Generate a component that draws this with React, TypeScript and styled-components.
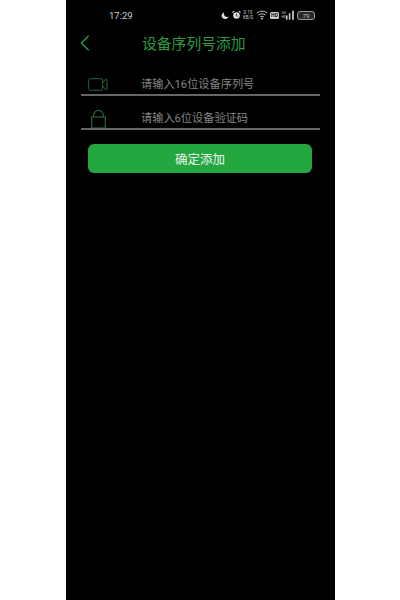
import styled, { createGlobalStyle } from 'styled-components'

const GlobalStyle = createGlobalStyle`
  html, body { margin: 0; padding: 0; background: #fff; }
  body { font-family: 'Roboto', 'Noto Sans CJK SC', sans-serif; }
`

const Moon = () => (
  <svg width="8" height="9" viewBox="0 0 10 10">
    <path d="M4 .8A4.4 4.4 0 1 0 9.4 6.2 4 4 0 0 1 4 .8z" fill="#ddd" />
  </svg>
)

const Alarm = () => (
  <svg width="9" height="10" viewBox="0 0 10 10">
    <circle cx="5" cy="5.6" r="3.6" fill="#ddd" />
    <path d="M5 3.6v2.2l1.4.8" stroke="#111" strokeWidth="0.9" fill="none" />
    <path d="M.6 2.4 2.4.7M9.4 2.4 7.6.7" stroke="#ddd" strokeWidth="1.2" />
  </svg>
)

const Wifi = () => (
  <svg width="12" height="10" viewBox="0 0 12 10" fill="none" stroke="#ccc" strokeWidth="1">
    <path d="M.8 3.2c3-2.7 7.4-2.7 10.4 0" />
    <path d="M2.5 5.1c2-1.7 5-1.7 7 0" />
    <path d="M4.2 6.9c1-.8 2.6-.8 3.6 0" />
    <circle cx="6" cy="8.6" r=".6" fill="#ccc" />
  </svg>
)

const Signal = () => (
  <svg width="9" height="10" viewBox="0 0 9 10" fill="#ccc">
    <rect x="0" y="5.5" width="1.6" height="4.5" />
    <rect x="3" y="3" width="1.6" height="7" />
    <rect x="6.5" y="0.5" width="1.8" height="9.5" />
  </svg>
)

const BackArrow = () => (
  <svg width="10" height="16" viewBox="0 0 10 16" fill="none" stroke="#2b9a42" strokeWidth="1.4">
    <path d="M8.6.8 1.4 8l7.2 7.2" />
  </svg>
)

const Camera = () => (
  <svg width="20" height="13" viewBox="0 0 21 14" fill="none" stroke="#2f6b3c" strokeWidth="1">
    <rect x="0.5" y="0.7" width="15" height="12.6" rx="2" />
    <path d="M15.5 5.2 18.6 1.4c.6-.6 1.6-.3 1.6.6v10c0 .9-1 1.2-1.6.6l-3.1-3.8" />
  </svg>
)

const Lock = () => (
  <svg width="15" height="18" viewBox="0 0 15 18" fill="none" stroke="#2f6b3c" strokeWidth="1.1">
    <rect x="0.7" y="7" width="13.6" height="11" />
    <path d="M2.6 7V5.4a4.9 4.9 0 0 1 9.8 0V7" />
  </svg>
)

export default function App() {
  return (
    <>
      <GlobalStyle />
      <Phone>
        <StatusBar>
          <Time>17:29</Time>
          <StatusIcons>
            <Moon />
            <Alarm />
            <Speed>0.15<br />KB/S</Speed>
            <Wifi />
            <HdBadge>HD</HdBadge>
            <SignalGroup>
              <NetworkLabel>5G<br />HD</NetworkLabel>
              <Signal />
            </SignalGroup>
            <Battery>79</Battery>
          </StatusIcons>
        </StatusBar>
        <Header>
          <BackButton><BackArrow /></BackButton>
          <Title>设备序列号添加</Title>
        </Header>
        <Form>
          <Field $height={40}>
            <IconSlot $left={7} $bottom={3}><Camera /></IconSlot>
            <Placeholder>请输入16位设备序列号</Placeholder>
          </Field>
          <Field $height={34}>
            <IconSlot $left={10} $bottom={0}><Lock /></IconSlot>
            <Placeholder>请输入6位设备验证码</Placeholder>
          </Field>
        </Form>
        <SubmitButton>确定添加</SubmitButton>
      </Phone>
    </>
  )
}

const Phone = styled.div`
  width: 269px;
  height: 600px;
  margin-left: 66px;
  background: #000;
  overflow: hidden;
`

const StatusBar = styled.div`
  height: 30px;
  display: flex;
  align-items: center;
  padding: 0 20px 0 43px;
  box-sizing: border-box;
`

const Time = styled.div`
  font-size: 9.5px;
  color: #ccc;
  flex: 1;
`

const StatusIcons = styled.div`
  display: flex;
  align-items: center;
  gap: 2.5px;
`

const Speed = styled.div`
  width: 10px;
  font-size: 4.5px;
  line-height: 5px;
  color: #ccc;
  text-align: center;
  white-space: nowrap;
`

const HdBadge = styled.div`
  width: 9px;
  height: 7px;
  border-radius: 1.5px;
  background: #ccc;
  color: #111;
  font-size: 5px;
  font-weight: 700;
  line-height: 7px;
  text-align: center;
`

const SignalGroup = styled.div`
  width: 13px;
  display: flex;
  align-items: center;
  gap: 0.5px;
`

const NetworkLabel = styled.div`
  width: 4px;
  font-size: 3.5px;
  line-height: 4px;
  color: #ccc;
`

const Battery = styled.div`
  width: 16px;
  height: 7px;
  border: 1px solid #999;
  border-radius: 3px;
  background: #2a2a2a;
  font-size: 6px;
  line-height: 7px;
  color: #bbb;
  text-align: center;
`

const Header = styled.div`
  height: 26px;
  display: flex;
  align-items: center;
  padding-left: 14px;
`

const BackButton = styled.div`
  width: 62px;
  display: flex;
  align-items: center;
  margin-top: -1px;
`

const Title = styled.div`
  font-size: 14.8px;
  color: #2b9a42;
  white-space: nowrap;
  margin-top: -1px;
`

const Form = styled.div`
  margin: 0 15px;
  display: flex;
  flex-direction: column;
`

const Field = styled.div<{ $height: number }>`
  height: ${p => p.$height}px;
  display: flex;
  align-items: flex-end;
  box-sizing: border-box;
  border-bottom: 2px solid #666;
`

const IconSlot = styled.div<{ $left: number; $bottom: number }>`
  width: 60px;
  display: flex;
  padding-left: ${p => p.$left}px;
  padding-bottom: ${p => p.$bottom}px;
  box-sizing: border-box;
`

const Placeholder = styled.div`
  font-size: 11.2px;
  line-height: 16px;
  color: #858585;
  padding-bottom: 1px;
`

const SubmitButton = styled.div`
  margin: 14px 23px 0 22px;
  height: 29px;
  border-radius: 6px;
  background: #22a83e;
  color: #f2f2f2;
  font-size: 12.5px;
  display: flex;
  align-items: center;
  justify-content: center;
`
